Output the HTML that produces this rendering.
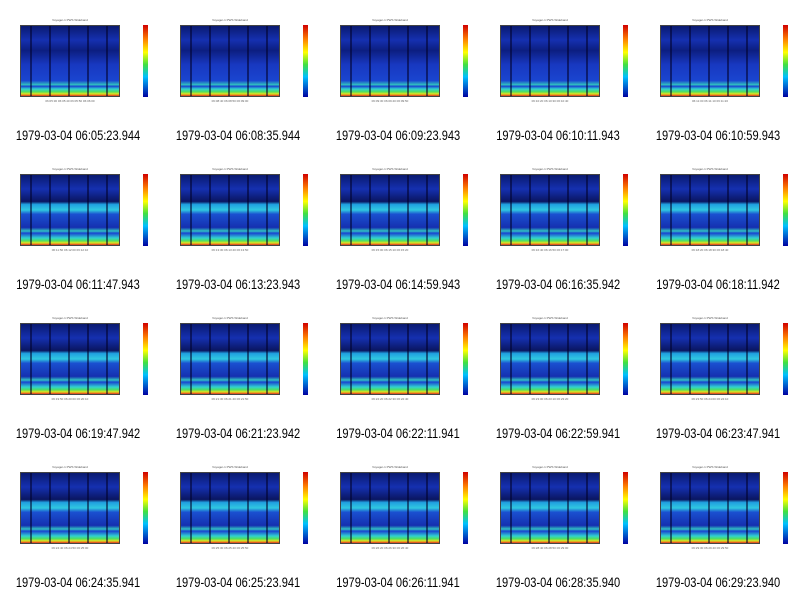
<!DOCTYPE html>
<html><head><meta charset="utf-8"><style>
body{margin:0;width:800px;height:596px;background:#fff;position:relative;overflow:hidden;font-family:"Liberation Sans",sans-serif}
.c{position:absolute;width:160px;height:149px}
.p{position:absolute;left:20px;top:25px;width:100px;height:72px;border:1px solid #444;box-sizing:border-box;
background:
repeating-linear-gradient(90deg,rgba(0,0,40,0) 0 9px,rgba(0,0,40,.55) 9px 11px,rgba(0,0,40,0) 11px 19px),
linear-gradient(180deg,#0a1a70 0%,#1530b0 20%,#0c1e80 35%,#1838c0 55%,#1a45d0 78%,#30c0c0 84%,#1a45d0 86%,#30d0d0 90%,#50e060 94%,#e0e020 97%,#e03020 100%)}
.b .p{background:
repeating-linear-gradient(90deg,rgba(0,0,40,0) 0 9px,rgba(0,0,40,.55) 9px 11px,rgba(0,0,40,0) 11px 19px),
linear-gradient(180deg,#0a1a70 0%,#1530b0 20%,#0a1660 38%,#20a0e0 42%,#30c8e0 50%,#1a50d0 56%,#1530b0 75%,#30c0c0 80%,#1a45d0 83%,#30d0d0 90%,#50e060 94%,#e0e020 97%,#e03020 100%)}
.t{position:absolute;left:20px;top:18px;width:100px;text-align:center;font-size:3px;color:#555}
.cb{position:absolute;left:143px;top:25px;width:5px;height:72px;background:linear-gradient(180deg,#d00000,#ff8000 20%,#ffff00 38%,#40e040 55%,#00c0ff 72%,#0000a0)}
.x{position:absolute;left:20px;top:99px;width:100px;height:8px;font-size:3px;color:#666;text-align:center;line-height:4px}
.cap{position:absolute;left:-2px;top:128px;width:160px;text-align:center;font-size:13.5px;color:#000;transform:scaleX(0.82);white-space:nowrap}
</style></head><body>
<div class="c" style="left:0;top:0"><div class="t">Voyager-1 PWS Wideband</div><div class="p"></div><div class="cb"></div><div class="x">06:05:30 06:05:40 06:05:50 06:06:00</div><div class="cap">1979-03-04 06:05:23.944</div></div>
<div class="c" style="left:160px;top:0"><div class="t">Voyager-1 PWS Wideband</div><div class="p"></div><div class="cb"></div><div class="x">06:08:40 06:08:50 06:09:00</div><div class="cap">1979-03-04 06:08:35.944</div></div>
<div class="c" style="left:320px;top:0"><div class="t">Voyager-1 PWS Wideband</div><div class="p"></div><div class="cb"></div><div class="x">06:09:30 06:09:40 06:09:50</div><div class="cap">1979-03-04 06:09:23.943</div></div>
<div class="c" style="left:480px;top:0"><div class="t">Voyager-1 PWS Wideband</div><div class="p"></div><div class="cb"></div><div class="x">06:10:20 06:10:30 06:10:40</div><div class="cap">1979-03-04 06:10:11.943</div></div>
<div class="c" style="left:640px;top:0"><div class="t">Voyager-1 PWS Wideband</div><div class="p"></div><div class="cb"></div><div class="x">06:11:00 06:11:10 06:11:20</div><div class="cap">1979-03-04 06:10:59.943</div></div>

<div class="c b" style="left:0;top:149px"><div class="t">Voyager-1 PWS Wideband</div><div class="p"></div><div class="cb"></div><div class="x">06:11:50 06:12:00 06:12:10</div><div class="cap">1979-03-04 06:11:47.943</div></div>
<div class="c b" style="left:160px;top:149px"><div class="t">Voyager-1 PWS Wideband</div><div class="p"></div><div class="cb"></div><div class="x">06:13:30 06:13:40 06:13:50</div><div class="cap">1979-03-04 06:13:23.943</div></div>
<div class="c b" style="left:320px;top:149px"><div class="t">Voyager-1 PWS Wideband</div><div class="p"></div><div class="cb"></div><div class="x">06:15:00 06:15:10 06:15:20</div><div class="cap">1979-03-04 06:14:59.943</div></div>
<div class="c b" style="left:480px;top:149px"><div class="t">Voyager-1 PWS Wideband</div><div class="p"></div><div class="cb"></div><div class="x">06:16:40 06:16:50 06:17:00</div><div class="cap">1979-03-04 06:16:35.942</div></div>
<div class="c b" style="left:640px;top:149px"><div class="t">Voyager-1 PWS Wideband</div><div class="p"></div><div class="cb"></div><div class="x">06:18:20 06:18:30 06:18:40</div><div class="cap">1979-03-04 06:18:11.942</div></div>

<div class="c b" style="left:0;top:298px"><div class="t">Voyager-1 PWS Wideband</div><div class="p"></div><div class="cb"></div><div class="x">06:19:50 06:20:00 06:20:10</div><div class="cap">1979-03-04 06:19:47.942</div></div>
<div class="c b" style="left:160px;top:298px"><div class="t">Voyager-1 PWS Wideband</div><div class="p"></div><div class="cb"></div><div class="x">06:21:30 06:21:40 06:21:50</div><div class="cap">1979-03-04 06:21:23.942</div></div>
<div class="c b" style="left:320px;top:298px"><div class="t">Voyager-1 PWS Wideband</div><div class="p"></div><div class="cb"></div><div class="x">06:22:20 06:22:30 06:22:40</div><div class="cap">1979-03-04 06:22:11.941</div></div>
<div class="c b" style="left:480px;top:298px"><div class="t">Voyager-1 PWS Wideband</div><div class="p"></div><div class="cb"></div><div class="x">06:23:00 06:23:10 06:23:20</div><div class="cap">1979-03-04 06:22:59.941</div></div>
<div class="c b" style="left:640px;top:298px"><div class="t">Voyager-1 PWS Wideband</div><div class="p"></div><div class="cb"></div><div class="x">06:23:50 06:24:00 06:24:10</div><div class="cap">1979-03-04 06:23:47.941</div></div>

<div class="c b" style="left:0;top:447px"><div class="t">Voyager-1 PWS Wideband</div><div class="p"></div><div class="cb"></div><div class="x">06:24:40 06:24:50 06:25:00</div><div class="cap">1979-03-04 06:24:35.941</div></div>
<div class="c b" style="left:160px;top:447px"><div class="t">Voyager-1 PWS Wideband</div><div class="p"></div><div class="cb"></div><div class="x">06:25:30 06:25:40 06:25:50</div><div class="cap">1979-03-04 06:25:23.941</div></div>
<div class="c b" style="left:320px;top:447px"><div class="t">Voyager-1 PWS Wideband</div><div class="p"></div><div class="cb"></div><div class="x">06:26:20 06:26:30 06:26:40</div><div class="cap">1979-03-04 06:26:11.941</div></div>
<div class="c b" style="left:480px;top:447px"><div class="t">Voyager-1 PWS Wideband</div><div class="p"></div><div class="cb"></div><div class="x">06:28:40 06:28:50 06:29:00</div><div class="cap">1979-03-04 06:28:35.940</div></div>
<div class="c b" style="left:640px;top:447px"><div class="t">Voyager-1 PWS Wideband</div><div class="p"></div><div class="cb"></div><div class="x">06:29:30 06:29:40 06:29:50</div><div class="cap">1979-03-04 06:29:23.940</div></div>
</body></html>
